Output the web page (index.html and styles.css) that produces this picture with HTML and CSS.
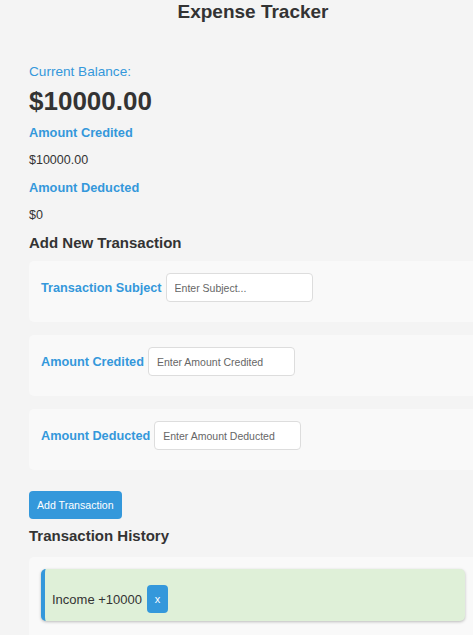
FILE: index.html
```html
<!DOCTYPE html>
<html lang="en">
<head>
<meta charset="utf-8">
<title>Expense Tracker</title>
<link rel="stylesheet" href="styles.css">
</head>
<body>
<div class="container">
  <h1 class="title">Expense Tracker</h1>

  <div class="label-top balance-label">Current Balance:</div>
  <div class="balance">$10000.00</div>

  <div class="label-top credited-label">Amount Credited</div>
  <div class="amount">$10000.00</div>

  <div class="label-top deducted-label">Amount Deducted</div>
  <div class="amount">$0</div>

  <h2 class="section-title add-title">Add New Transaction</h2>

  <div class="form-card">
    <label class="form-label" for="subject">Transaction Subject</label>
    <input class="form-input" id="subject" type="text" placeholder="Enter Subject...">
  </div>
  <div class="form-card">
    <label class="form-label" for="credit">Amount Credited</label>
    <input class="form-input" id="credit" type="text" placeholder="Enter Amount Credited">
  </div>
  <div class="form-card">
    <label class="form-label" for="debit">Amount Deducted</label>
    <input class="form-input" id="debit" type="text" placeholder="Enter Amount Deducted">
  </div>

  <button class="add-btn" type="button">Add Transaction</button>

  <h2 class="section-title history-title">Transaction History</h2>

  <div class="history">
    <div class="history-item income">
      <span class="history-text">Income +10000</span>
      <button class="delete-btn" type="button">x</button>
    </div>
  </div>
</div>
</body>
</html>
```

FILE: styles.css
```css
html {
  overflow-x: hidden;
}

body {
  margin: 0;
  background: #f4f4f4;
  font-family: "Liberation Sans", Arial, sans-serif;
  color: #333;
}

.container {
  width: 448px;
  margin-left: 29px;
}

.title {
  margin: 1px 0 0;
  font-size: 19px;
  line-height: 22px;
  font-weight: bold;
  text-align: center;
  color: #333;
}

.label-top {
  color: #3498db;
  font-size: 12.8px;
  line-height: 15px;
  font-weight: bold;
}

.balance-label {
  margin-top: 41px;
  font-size: 13.6px;
  line-height: 16px;
  font-weight: normal;
}

.balance {
  margin-top: 6px;
  font-size: 26px;
  line-height: 30px;
  font-weight: bold;
  color: #333;
}

.credited-label {
  margin-top: 9px;
}

.deducted-label {
  margin-top: 12px;
}

.amount {
  margin-top: 13px;
  font-size: 12.5px;
  line-height: 15px;
  color: #333;
}

.section-title {
  margin: 0;
  font-size: 15px;
  line-height: 18px;
  font-weight: bold;
  color: #333;
}

.add-title {
  margin-top: 11px;
}

.form-card {
  display: flex;
  align-items: center;
  gap: 4px;
  height: 61px;
  box-sizing: border-box;
  padding: 12px 12px 20px;
  margin-top: 13px;
  background: #f9f9f9;
  border-radius: 5px;
}

.add-title + .form-card {
  margin-top: 9px;
}

.form-label {
  color: #3498db;
  font-size: 12.7px;
  font-weight: bold;
}

.form-input {
  width: 147px;
  height: 29px;
  box-sizing: border-box;
  padding: 0 8px;
  border: 1px solid #ddd;
  border-radius: 4px;
  background: #fff;
  font-family: "Liberation Sans", Arial, sans-serif;
  font-size: 10.5px;
  color: #333;
}

.form-input::placeholder {
  color: #666;
}

.add-btn {
  display: block;
  margin-top: 21px;
  height: 28px;
  padding: 0 8px;
  border: none;
  border-radius: 4px;
  background: #3498db;
  color: #fff;
  font-family: "Liberation Sans", Arial, sans-serif;
  font-size: 10.6px;
  line-height: 28px;
}

.history-title {
  margin-top: 8px;
}

.history {
  margin-top: 12px;
  padding: 12px;
  background: #f9f9f9;
  border-radius: 5px;
  min-height: 100px;
}

.history-item {
  display: flex;
  align-items: center;
  gap: 5px;
  padding: 16px 8px 8px 7px;
  border-left: 4px solid #3498db;
  border-radius: 5px;
  background: #dff0d8;
  box-shadow: 0 1px 3px rgba(0, 0, 0, 0.25);
}

.history-text {
  font-size: 13px;
  color: #333;
}

.delete-btn {
  width: 21px;
  height: 28px;
  padding: 0;
  border: none;
  border-radius: 4px;
  background: #3498db;
  color: #fff;
  font-family: "Liberation Sans", Arial, sans-serif;
  font-size: 11px;
}
```
